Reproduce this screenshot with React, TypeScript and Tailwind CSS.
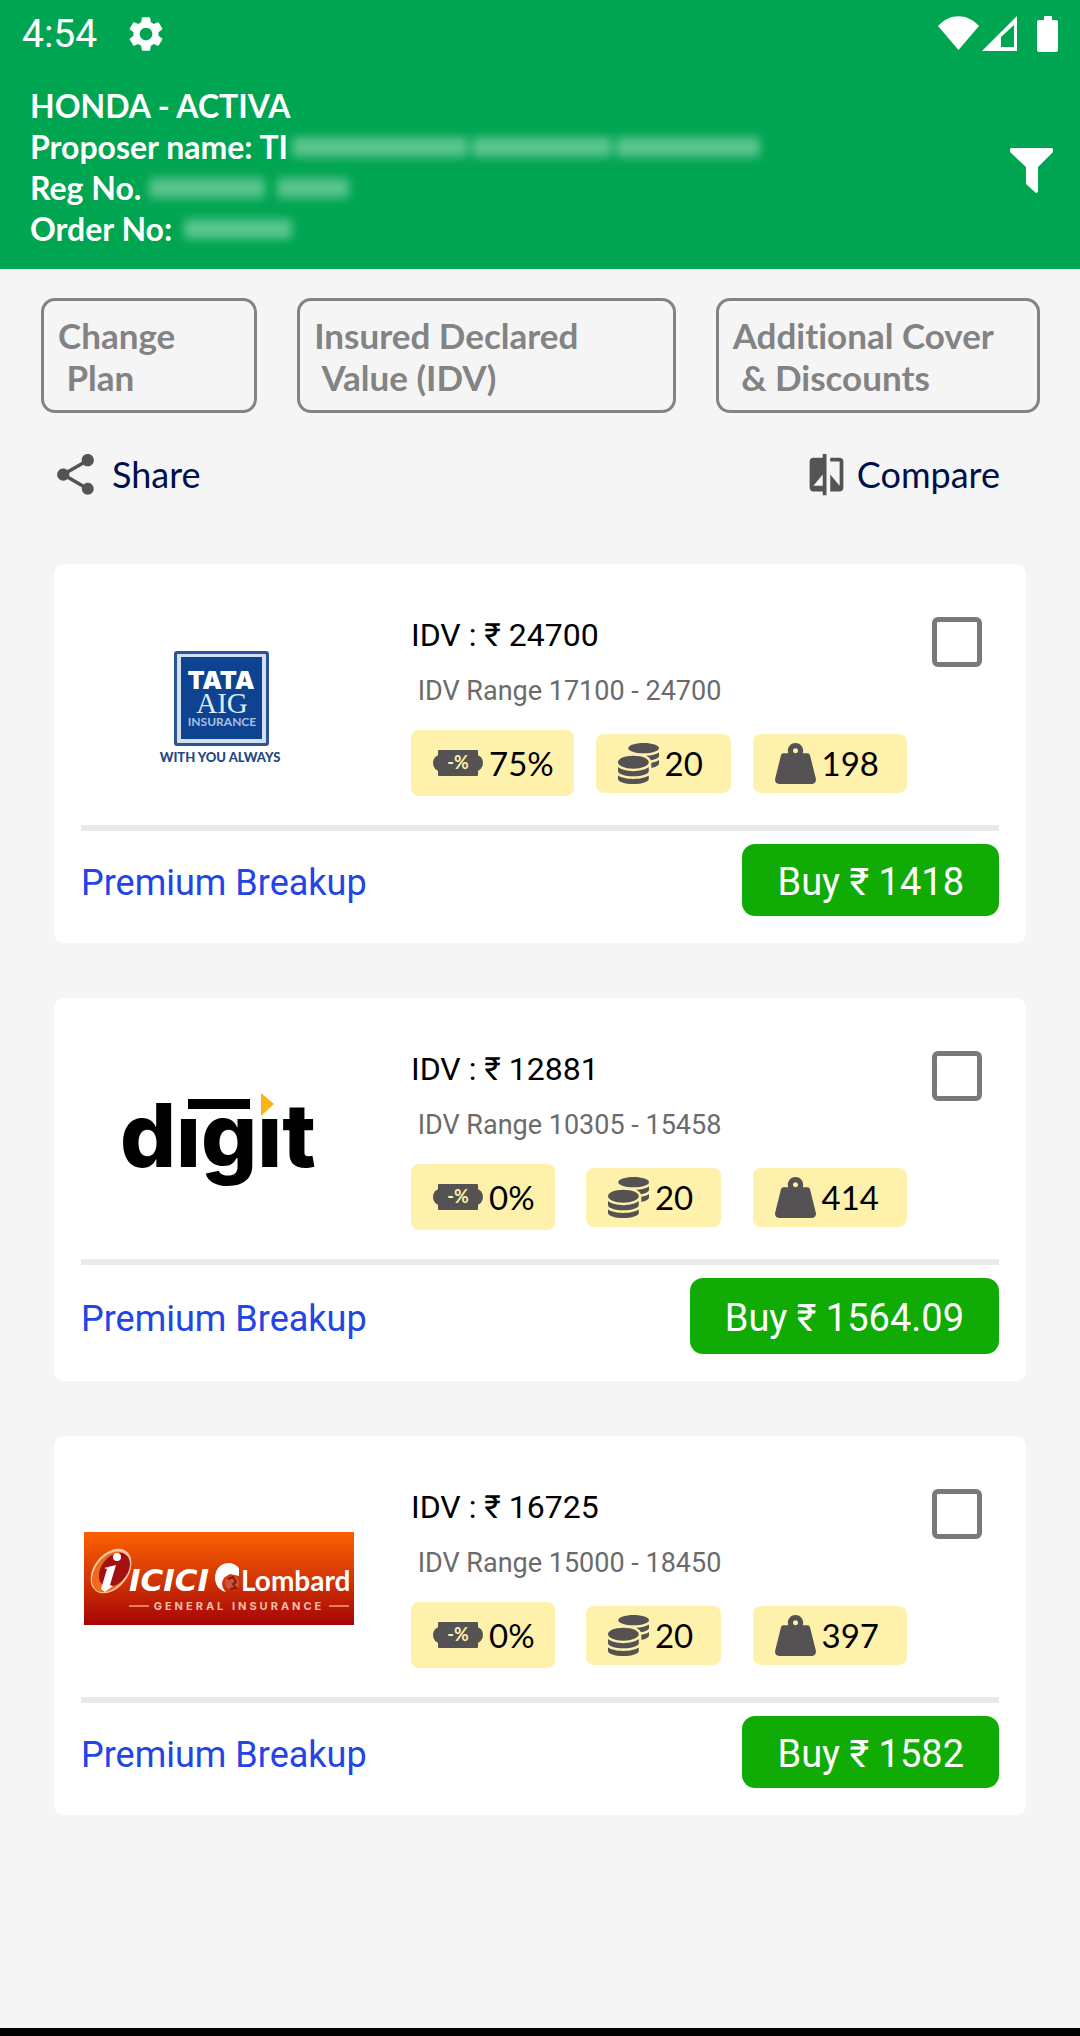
import { useState } from "react";
import type { ReactNode } from "react";
import { FaCoins, FaWeightHanging } from "react-icons/fa";
import { MdCompare, MdSettings, MdShare } from "react-icons/md";

type Offer = {
  id: string;
  logo: ReactNode;
  idv: number;
  range: [number, number];
  discount: number;
  coins: number;
  weight: number;
  premium: number;
};

function TataAigLogo() {
  return (
    <svg width="120" height="114" viewBox="-2 0 120 114" className="overflow-visible" role="img" aria-label="TATA AIG Insurance">
      <rect x="13" y="1" width="95" height="95" rx="3" fill="#2b5596" />
      <rect x="16" y="4" width="89" height="89" rx="1" fill="#d3e0f2" />
      <rect x="20" y="7" width="81" height="82" fill="#0d4390" />
      <text x="60" y="39" textAnchor="middle" fill="#fff" fontFamily="Inter, sans-serif" fontWeight="900" fontSize="25">TATA</text>
      <text x="61" y="63" textAnchor="middle" fill="#dfe9f6" fontFamily="Liberation Serif, serif" fontSize="29">AIG</text>
      <text x="61" y="76" textAnchor="middle" fill="#a9c0e0" fontFamily="Lato, sans-serif" fontWeight="700" fontSize="12">INSURANCE</text>
      <text x="59" y="112" textAnchor="middle" fill="#234883" fontFamily="Lato, sans-serif" fontWeight="900" fontSize="13">WITH YOU ALWAYS</text>
    </svg>
  );
}

function DigitLogo() {
  return (
    <svg width="194" height="96" viewBox="0 0 194 96" className="overflow-visible" role="img" aria-label="digit">
      <text x="-2" y="74" fill="#000" fontFamily="Inter, sans-serif" fontWeight="800" fontSize="88">dıgıt</text>
      <rect x="66" y="6" width="62" height="10" />
      <path d="M139 0 152 11 139 23z" fill="#fcb316" />
    </svg>
  );
}

function IciciLogo() {
  return (
    <svg width="270" height="93" viewBox="0 0 270 93" className="overflow-visible" role="img" aria-label="ICICI Lombard General Insurance">
      <defs>
        <linearGradient id="icici-bg" x1="0" y1="0" x2="0" y2="1">
          <stop offset="0" stopColor="#fb6000" />
          <stop offset="0.5" stopColor="#d33705" />
          <stop offset="1" stopColor="#a60505" />
        </linearGradient>
      </defs>
      <rect width="270" height="93" fill="url(#icici-bg)" />
      <g transform="rotate(38 27 39)">
        <ellipse cx="27" cy="39" rx="17" ry="25" fill="#f9c9a5" />
        <ellipse cx="27" cy="40" rx="15" ry="23" fill="#ee6a1c" />
        <ellipse cx="29" cy="36" rx="13" ry="19" fill="#a30f12" />
      </g>
      <circle cx="33" cy="25" r="4" fill="#fff" />
      <path d="M20 36l12-3-6 20 3 1-8 6-4-3 6-20z" fill="#fff" />
      <text x="45" y="59" fill="#fff" fontFamily="DejaVu Sans, sans-serif" fontStyle="italic" fontWeight="700" fontSize="31">ICICI</text>
      <path d="M155 36c-7-8-19-6-23 4-3 9 1 18 10 20-5-5-5-11-1-15l5-3 9 2z" fill="#fff" />
      <circle cx="148" cy="51" r="7" fill="#c9563b" />
      <path d="M144 47l5-2 3 5-3 2 3 4-6 1" fill="none" stroke="#8e1208" strokeWidth="2" />
      <text x="157" y="59" fill="#fff" fontFamily="Lato, sans-serif" fontWeight="700" fontSize="28">Lombard</text>
      <path d="M45 74h20M245 74h20" stroke="#e3805f" strokeWidth="2" />
      <text x="155" y="78" textAnchor="middle" fill="#f4bda9" fontFamily="Inter, sans-serif" fontWeight="700" fontSize="11" letterSpacing="3">GENERAL INSURANCE</text>
    </svg>
  );
}

function DiscountIcon() {
  return (
    <svg width="50" height="26" viewBox="0 0 50 26" fill="#545252" aria-hidden="true">
      <rect x="5" width="40" height="26" rx="1" />
      <ellipse cx="7" cy="13" rx="7" ry="8" />
      <ellipse cx="43" cy="13" rx="7" ry="8" />
      <text x="25" y="19" textAnchor="middle" fill="#fef1ab" fontFamily="Lato, sans-serif" fontWeight="700" fontSize="18">-%</text>
    </svg>
  );
}

function StatusIcons() {
  return (
    <svg width="122" height="38" viewBox="0 0 122 38" fill="#fff" aria-hidden="true">
      <path d="M0 11C12-2 29-2 41 11L20.500 35z" />
      <path fillRule="evenodd" d="M44 36 79 1V36zM63 22V32H76V10z" />
      <path d="M106 1h8v4h4a2 2 0 0 1 2 2v28a2 2 0 0 1-2 2h-17a2 2 0 0 1-2-2V7a2 2 0 0 1 2-2h5z" />
    </svg>
  );
}

const offers: Offer[] = [
  { id: "tata", logo: <TataAigLogo />, idv: 24700, range: [17100, 24700], discount: 75, coins: 20, weight: 198, premium: 1418 },
  { id: "digit", logo: <DigitLogo />, idv: 12881, range: [10305, 15458], discount: 0, coins: 20, weight: 414, premium: 1564.09 },
  { id: "icici", logo: <IciciLogo />, idv: 16725, range: [15000, 18450], discount: 0, coins: 20, weight: 397, premium: 1582 },
];

const tabs = ["Change\n Plan", "Insured Declared\n Value (IDV)", "Additional Cover\n & Discounts"];

function Redacted({ className }: { className: string }) {
  return <span className={`inline-block h-5 rounded-sm bg-white/35 blur-[5px] ${className}`} />;
}

function Header() {
  return (
    <header className="bg-[#00a552] text-white">
      <div className="flex h-[68px] items-center pl-[22px] pr-5">
        <span className="font-[Roboto,sans-serif] text-[39px] leading-10">4:54</span>
        <MdSettings size={42} className="ml-7" />
        <div className="ml-auto">
          <StatusIcons />
        </div>
      </div>
      <div className="flex items-center justify-between pl-[30px] pr-[27px]">
        <div className="pt-[17px] pb-5 text-[32px] leading-[41px] font-bold">
          <h1>HONDA - ACTIVA</h1>
          <p className="flex items-center">
            Proposer name: TI
            <Redacted className="ml-1 w-[176px]" />
            <Redacted className="ml-1 w-[140px]" />
            <Redacted className="ml-1 w-[144px]" />
          </p>
          <p className="flex items-center">
            Reg No.
            <Redacted className="ml-2 w-[116px]" />
            <Redacted className="ml-3 w-[72px]" />
          </p>
          <p className="flex items-center">
            Order No:
            <Redacted className="ml-3 w-[108px]" />
          </p>
        </div>
        <button aria-label="Filter" className="pt-1">
          <svg width="43" height="45" viewBox="0 0 43 45" fill="#fff">
            <path d="M1 0h41l1 1v3L28 19v25l-2 1-10-9V19L0 4V1z" />
          </svg>
        </button>
      </div>
    </header>
  );
}

function Chip({ icon, tall, children }: { icon: ReactNode; tall?: boolean; children: ReactNode }) {
  return (
    <span
      className={`flex items-center gap-[6px] rounded-lg bg-[#fef1ab] pl-[22px] text-[33px] leading-10 text-black ${
        tall ? "py-[13px] pr-5" : "py-[9px] pr-7"
      }`}
    >
      {icon}
      {children}
    </span>
  );
}

function OfferCard({ offer, checked, onToggle }: { offer: Offer; checked: boolean; onToggle: () => void }) {
  return (
    <article className="rounded-[10px] bg-white font-[Roboto,sans-serif]">
      <div className="flex pr-11 pl-[30px]">
        <div className="flex w-[270px] shrink-0 items-center justify-center pt-6">{offer.logo}</div>
        <div className="ml-[57px] flex-1 pt-[51px] pb-[29px]">
          <h2 className="text-[32px] leading-10 text-black">IDV : ₹ {offer.idv}</h2>
          <p className="mt-5 text-[27px] leading-8 whitespace-pre text-[#6b6b6b]">
            {` IDV Range ${offer.range[0]} - ${offer.range[1]}`}
          </p>
          <div className="mt-[23px] flex items-center justify-between font-[Lato,sans-serif]">
            <Chip tall icon={<DiscountIcon />}>{offer.discount}%</Chip>
            <Chip icon={<FaCoins size={41} color="#545252" />}>{offer.coins}</Chip>
            <Chip icon={<FaWeightHanging size={41} color="#545252" />}>{offer.weight}</Chip>
          </div>
        </div>
        <input
          type="checkbox"
          aria-label={`Compare offer with IDV ${offer.idv}`}
          checked={checked}
          onChange={onToggle}
          className="mt-[53px] ml-[25px] size-[50px] shrink-0 appearance-none rounded-md border-[5px] border-[#797979] checked:bg-[#797979]"
        />
      </div>
      <div className="mx-[27px] flex items-center justify-between border-t-[6px] border-[#eaeaea] pt-[13px] pb-[27px]">
        <a href="#premium" className="pt-[6px] text-[36px] leading-[42px] text-[#2245e4]">
          Premium Breakup
        </a>
        <button
          className={`rounded-[13px] bg-[#10ab05] px-[35px] pt-1 text-[38px] text-white ${
            Number.isInteger(offer.premium) ? "h-[72px]" : "h-[76px]"
          }`}
        >
          Buy ₹ {offer.premium}
        </button>
      </div>
    </article>
  );
}

export default function App() {
  const [selected, setSelected] = useState<string[]>([]);

  function toggle(id: string) {
    setSelected((prev) => (prev.includes(id) ? prev.filter((x) => x !== id) : [...prev, id]));
  }

  return (
    <div className="flex min-h-screen flex-col border-b-8 border-black bg-[#f5f5f5] font-[Lato,sans-serif] [font-variant-ligatures:none]">
      <Header />

      <nav className="mt-[29px] grid grid-cols-[4fr_7fr_6fr] gap-10 pr-10 pl-[41px]">
        {tabs.map((tab) => (
          <button
            key={tab}
            className="rounded-[14px] border-[3px] border-[#838383] px-[14px] pt-[13px] pb-3 text-left text-[35px] leading-[42px] font-bold whitespace-pre text-[#838383]"
          >
            {tab}
          </button>
        ))}
      </nav>

      <div className="mt-9 flex h-[50px] items-center justify-between pr-20 pl-[51px] text-[36px] leading-[42px] text-[#00104a]">
        <button className="flex items-center gap-3">
          <MdShare size={49} color="#545454" />
          Share
        </button>
        <button className="flex items-center gap-2">
          <MdCompare size={45} color="#545454" />
          Compare
        </button>
      </div>

      <main className="mx-[54px] mt-[65px] flex flex-col gap-[55px] pb-16">
        {offers.map((offer) => (
          <OfferCard
            key={offer.id}
            offer={offer}
            checked={selected.includes(offer.id)}
            onToggle={() => toggle(offer.id)}
          />
        ))}
      </main>
    </div>
  );
}
